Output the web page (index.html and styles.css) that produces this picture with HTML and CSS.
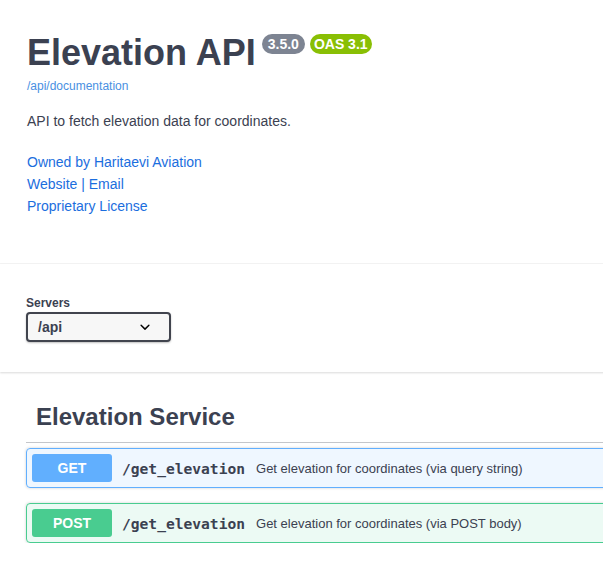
FILE: index.html
```html
<!DOCTYPE html>
<html lang="en">
<head>
    <meta charset="UTF-8">
    <meta name="viewport" content="width=device-width, initial-scale=1.0">
    <title>Elevation API</title>

    <link rel="stylesheet" href="styles.css">
</head>
<body>

    <div class="swagger">
        <section class="info">
            <div class="title-row">
                <h2 class="title">Elevation API</h2>
                <span class="badge version">3.5.0</span>
                <span class="badge oas">OAS 3.1</span>
            </div>
            <a class="spec-url" href="#">/api/documentation</a>
            <p class="description">API to fetch elevation data for coordinates.</p>
            <div class="contact">
                <div><a href="#">Owned by Haritaevi Aviation</a></div>
                <div><a href="#">Website</a> | <a href="#">Email</a></div>
                <div><a href="#">Proprietary License</a></div>
            </div>
        </section>

        <section class="schemes">
            <label class="servers-label">Servers</label>
            <div class="select">
                <span>/api</span>
                <svg class="chevron" viewBox="0 0 20 20" width="20" height="20">
                    <path d="M13.418 7.859a.695.695 0 01.978 0 .68.68 0 010 .969l-3.908 3.83a.697.697 0 01-.979 0l-3.908-3.830a.68.68 0 010-.969.695.695 0 01.978 0L10 11z" fill="#000"/>
                </svg>
            </div>
        </section>

        <section class="tag">
            <h3 class="tag-title">Elevation Service</h3>

            <div class="opblock get">
                <span class="method">GET</span>
                <span class="path">/get_elevation</span>
                <span class="summary">Get elevation for coordinates (via query string)</span>
            </div>

            <div class="opblock post">
                <span class="method">POST</span>
                <span class="path">/get_elevation</span>
                <span class="summary">Get elevation for coordinates (via POST body)</span>
            </div>
        </section>
    </div>

</body>
</html>
```

FILE: styles.css
```css
* {
    margin: 0;
    padding: 0;
    box-sizing: border-box;
}

html, body {
    overflow: hidden;
}

body {
    background-color: #fff;
    font-family: "Liberation Sans", Arial, sans-serif;
    color: #3b4151;
}

.swagger {
    width: 760px;
}

/* info block */
.info {
    padding: 31px 0 46px 26px;
    border-bottom: 1px solid #f4f4f4;
}

.title-row {
    display: flex;
    align-items: flex-start;
}

.title {
    font-size: 36px;
    line-height: 43px;
    font-weight: bold;
    color: #3b4151;
    margin-left: 1px;
    margin-right: 6px;
}

.badge {
    margin-top: 3px;
    margin-right: 5px;
    border-radius: 57px;
    color: #fff;
    font-size: 14px;
    font-weight: bold;
    line-height: 16px;
    padding: 2px 6px;
}

.version {
    background-color: #7d8492;
}

.oas {
    background-color: #89bf04;
    padding: 2px 4px;
}

.spec-url {
    display: block;
    margin-top: 5px;
    margin-left: 1px;
    font-size: 12px;
    line-height: 14px;
    color: #4990e2;
    text-decoration: none;
}

.description {
    margin-top: 18px;
    margin-left: 1px;
    font-size: 14px;
    line-height: 20px;
}

.contact {
    margin-top: 20px;
    margin-left: 1px;
    font-size: 14px;
    line-height: 22px;
    color: #1b6ede;
}

.contact a {
    color: #1b6ede;
    text-decoration: none;
}

/* servers */
.schemes {
    padding: 32px 0 30px 26px;
    box-shadow: 0 1px 2px 0 rgba(0, 0, 0, 0.15);
}

.servers-label {
    display: block;
    font-size: 12px;
    line-height: 14px;
    font-weight: bold;
}

.select {
    margin-top: 2px;
    width: 145px;
    height: 30px;
    display: flex;
    align-items: center;
    justify-content: space-between;
    padding: 0 14px 0 10px;
    border: 2px solid #41444e;
    border-radius: 4px;
    background-color: #f7f7f7;
    box-shadow: 0 1px 2px 0 rgba(0, 0, 0, 0.25);
    font-size: 14px;
    font-weight: bold;
}

/* operations */
.tag {
    padding-left: 26px;
}

.tag-title {
    margin-top: 30px;
    padding: 0 0 10px 10px;
    font-size: 24px;
    line-height: 30px;
    font-weight: bold;
    border-bottom: 1px solid rgba(59, 65, 81, 0.3);
}

.opblock {
    display: flex;
    align-items: center;
    margin-top: 5px;
    padding: 5px;
    border: 1px solid;
    border-radius: 4px;
    box-shadow: 0 0 3px rgba(0, 0, 0, 0.19);
}

.opblock + .opblock {
    margin-top: 15px;
}

.method {
    width: 80px;
    height: 28px;
    line-height: 28px;
    text-align: center;
    border-radius: 3px;
    color: #fff;
    font-size: 14px;
    font-weight: bold;
}

.path {
    margin-left: 10px;
    font-family: "DejaVu Sans Mono", monospace;
    font-size: 14.6px;
    font-weight: bold;
    color: #3b4151;
}

.summary {
    margin-left: 11px;
    font-size: 13px;
    color: #3b4151;
}

.get {
    background-color: rgba(97, 175, 254, 0.1);
    border-color: #61affe;
}

.get .method {
    background-color: #61affe;
}

.post {
    background-color: rgba(73, 204, 144, 0.1);
    border-color: #49cc90;
}

.post .method {
    background-color: #49cc90;
}
```
